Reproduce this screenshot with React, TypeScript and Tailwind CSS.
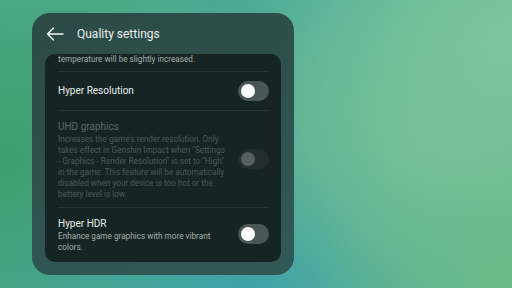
import React from "react";

function Toggle({ disabled = false }: { disabled?: boolean }) {
  return (
    <div
      className={
        "flex h-[20px] w-[31px] shrink-0 items-center rounded-full pl-[3px] " +
        (disabled ? "bg-[#232e2c]" : "bg-[#4b5755]")
      }
    >
      <div
        className={
          "h-[14px] w-[14px] rounded-full " +
          (disabled ? "bg-[#56605e]" : "bg-white")
        }
      />
    </div>
  );
}

export default function App() {
  return (
    <div
      className="relative h-[288px] w-[512px] overflow-hidden bg-[#4fab8c]"
      style={{ fontFamily: "Roboto, 'Noto Sans', sans-serif" }}
    >
      <div className="absolute inset-0 bg-[radial-gradient(ellipse_260px_220px_at_0px_160px,#3d9d6c_0%,rgba(61,157,108,0)_100%)]" />
      <div className="absolute inset-0 bg-[radial-gradient(ellipse_300px_200px_at_260px_300px,#3ea1aa_0%,rgba(62,161,170,0)_100%)]" />
      <div className="absolute inset-0 bg-[radial-gradient(ellipse_200px_160px_at_330px_0px,#43a59c_0%,rgba(67,165,156,0)_100%)]" />
      <div className="absolute inset-0 bg-[radial-gradient(ellipse_260px_230px_at_460px_150px,#72bd95_0%,rgba(114,189,149,0)_100%)]" />
      <div className="absolute inset-0 bg-[radial-gradient(ellipse_300px_260px_at_512px_40px,#7dc69c_0%,rgba(125,198,156,0)_100%)]" />
      <div className="absolute inset-0 bg-[radial-gradient(ellipse_200px_160px_at_512px_288px,#6cbb88_0%,rgba(108,187,136,0)_100%)]" />

      <div className="relative ml-[32px] mt-[13px] flex h-[262px] w-[262px] flex-col rounded-[18px] bg-[linear-gradient(160deg,#2c4a47_0%,#2f5350_60%,#305a57_100%)] px-[13px] pb-[13px]">
        <div className="flex h-[41px] shrink-0 items-center">
          <svg width="18" height="14" viewBox="0 0 18 14" className="ml-[1px]">
            <path
              d="M17 7H1.5M7.5 1L1.5 7l6 6"
              fill="none"
              stroke="#eef3f1"
              strokeWidth="1.4"
              strokeLinecap="round"
              strokeLinejoin="round"
            />
          </svg>
          <div className="ml-[13px] text-[12px] leading-none text-[#e9efed]">
            Quality settings
          </div>
        </div>

        <div className="flex-1 overflow-hidden rounded-[10px] bg-[#162523] px-[13px] pr-[12px]">
          <div className="border-b border-[#273533] pb-[6px]">
            <div className="-mt-[0.5px] text-[8.2px] leading-[11px] text-[#a5afac]">
              temperature will be slightly increased.
            </div>
          </div>

          <div className="flex h-[39px] items-center justify-between border-b border-[#273533]">
            <div className="pt-[1px] text-[10px] leading-[14px] text-[#e7edeb]">
              Hyper Resolution
            </div>
            <Toggle />
          </div>

          <div className="flex items-center justify-between border-b border-[#273533] pb-[7px] pt-[8px]">
            <div className="w-[168px]">
              <div className="text-[10px] leading-[15px] text-[#596764]">
                UHD graphics
              </div>
              <div className="text-[8.2px] leading-[11px] text-[#4c5956]">
                Increases the game's render resolution. Only takes effect in
                Genshin Impact when "Settings - Graphics - Render Resolution"
                is set to "High" in the game. This feature will be automatically
                disabled when your device is too hot or the battery level is
                low.
              </div>
            </div>
            <Toggle disabled />
          </div>

          <div className="flex items-center justify-between pt-[8px]">
            <div className="w-[168px]">
              <div className="text-[10px] leading-[15px] text-[#e7edeb]">
                Hyper HDR
              </div>
              <div className="text-[8.2px] leading-[11px] text-[#a5afac]">
                Enhance game graphics with more vibrant colors.
              </div>
            </div>
            <Toggle />
          </div>
        </div>
      </div>
    </div>
  );
}
